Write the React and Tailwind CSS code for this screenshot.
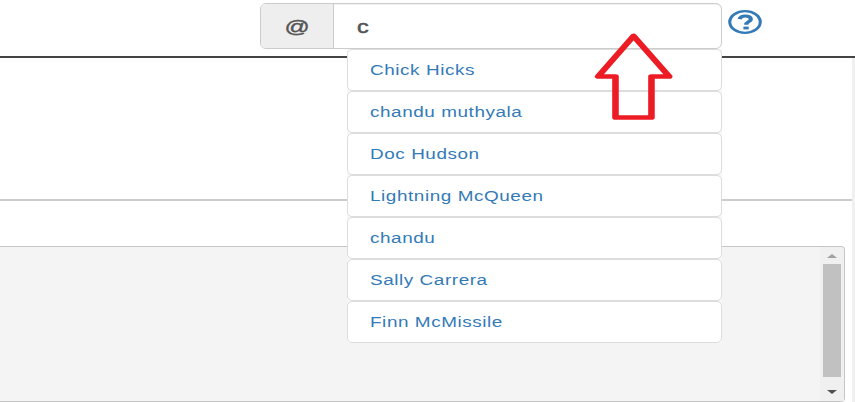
const names = [
  "Chick Hicks",
  "chandu muthyala",
  "Doc Hudson",
  "Lightning McQueen",
  "chandu",
  "Sally Carrera",
  "Finn McMissile",
];

function SearchBar() {
  return (
    <div className="flex h-[46px] w-[462px] rounded-[6px] border border-[#ccc] bg-white text-[18px] text-[#555]">
      <div className="flex w-[73px] items-center justify-center rounded-l-[5px] border-r border-[#ccc] bg-[#eee] pt-[2px]">
        <span className="inline-block scale-x-[1.38] [-webkit-text-stroke:0.4px_#555]">@</span>
      </div>
      <div className="flex flex-1 items-center rounded-r-[5px] pl-[23px] pt-[3px] shadow-[inset_0_1px_1px_rgba(0,0,0,0.06)]">
        <span className="inline-block origin-left scale-x-[1.3] [-webkit-text-stroke:0.5px_#555]">c</span>
      </div>
    </div>
  );
}

function HelpIcon() {
  return (
    <svg className="ml-[6px] mt-[6px]" width="34" height="26" viewBox="0 0 34 26" fill="none" stroke="#337ab7">
      <g transform="scale(1.4 1)">
        <ellipse cx="12.15" cy="13" rx="10.9" ry="10.8" strokeWidth="2.2" />
        <path d="M8.2 10.1C9 7.2 10.6 6.9 12.3 6.9C14.6 6.9 16.3 8.1 16.3 10.2C16.3 12.8 13 12.6 13 15.8" strokeWidth="3" />
        <path d="M11 19H14.8" strokeWidth="2.8" />
      </g>
    </svg>
  );
}

function Suggestions() {
  return (
    <ul className="absolute left-[347px] top-[49px] w-[375px] bg-[#f7f7f7]">
      {names.map((name) => (
        <li
          key={name}
          className="flex h-[42px] items-center rounded-[5px] border border-[#ddd] bg-white pl-[22px] text-[14px] text-[#337ab7]"
        >
          <span className="inline-block origin-left scale-x-[1.35] whitespace-nowrap tracking-[0.42px]">{name}</span>
        </li>
      ))}
    </ul>
  );
}

function Scrollbar() {
  return (
    <div className="flex w-[24px] flex-col items-center rounded-tr-[4px] bg-[#f0f0f0]">
      <svg className="mt-[7px] shrink-0" width="10" height="4" viewBox="0 0 10 4" fill="#a0a0a0">
        <path d="M0 4L5 0L10 4Z" />
      </svg>
      <div className="mt-[6px] h-[113px] w-[18px] bg-[#c1c1c1]" />
      <svg className="mt-[13px] shrink-0" width="10" height="4" viewBox="0 0 10 4" fill="#505050">
        <path d="M0 0H10L5 4Z" />
      </svg>
    </div>
  );
}

function PointerArrow() {
  return (
    <svg className="absolute left-[590px] top-[28px]" width="88" height="96" viewBox="0 0 88 96" fill="none">
      <g transform="scale(1.4 1)">
        <path d="M31.1 8L5.8 48.5H18.2V89.5H43.9V48.5H56.6L31.1 8Z" stroke="#ed1c24" strokeWidth="4.7" strokeLinejoin="round" />
      </g>
    </svg>
  );
}

export default function App() {
  return (
    <div className="relative flex h-[402px] w-[855px] flex-col overflow-hidden bg-white font-['Liberation_Sans',Arial,sans-serif]">
      <header className="flex h-[58px] shrink-0 items-start border-b-2 border-[#444] pl-[260px] pt-[3px]">
        <SearchBar />
        <HelpIcon />
      </header>
      <main className="flex min-h-0 flex-1">
        <div className="flex flex-1 flex-col">
          <div className="h-[143px] border-b-2 border-[#ccc]" />
          <section className="mr-[7px] mt-[45px] flex h-[156px] justify-end rounded-r-[4px] border-y border-r border-[#c6c6c6] bg-[#f4f4f4]">
            <Scrollbar />
          </section>
        </div>
        <div className="w-[3px] bg-[#f0f0f0]" />
      </main>
      <Suggestions />
      <PointerArrow />
    </div>
  );
}
